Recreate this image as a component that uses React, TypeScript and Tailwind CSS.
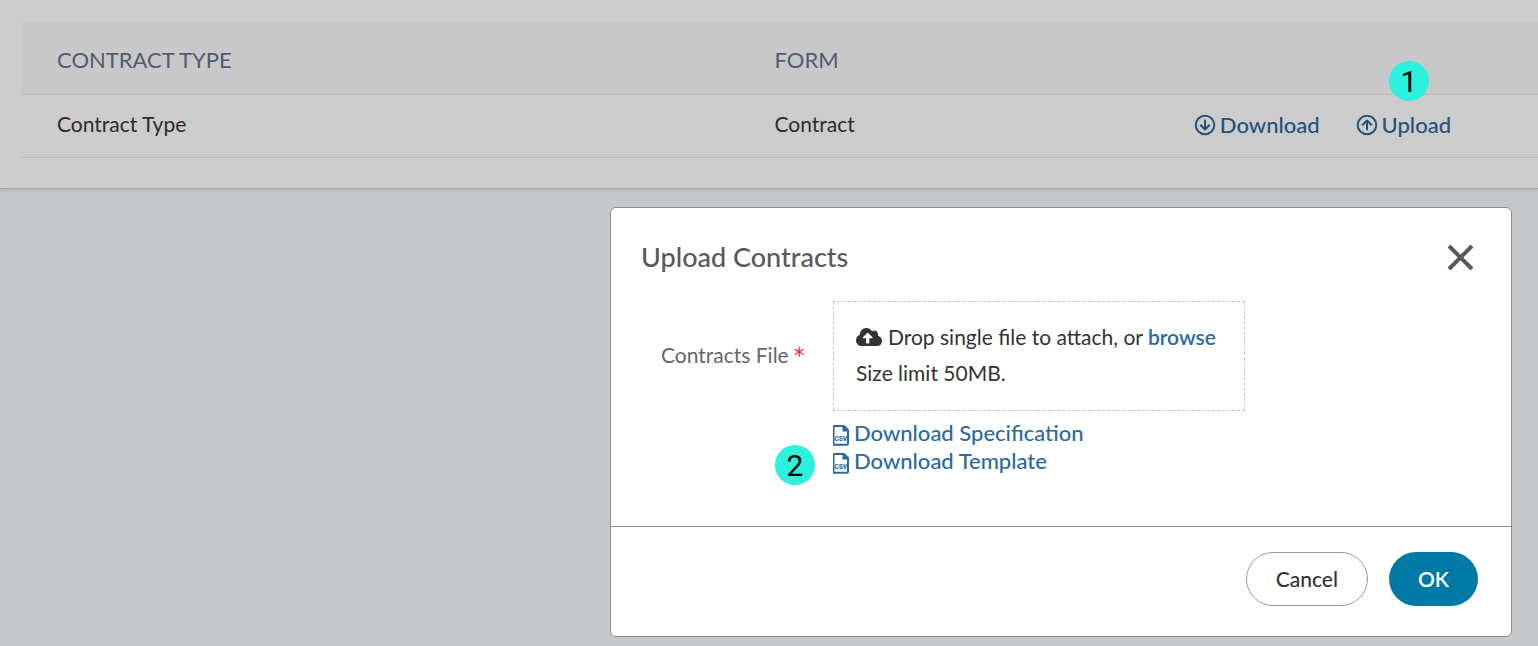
import React from "react";
import { FaCloudUploadAlt } from "react-icons/fa";

type IconProps = { className?: string };

const ArrowCircle: React.FC<IconProps> = ({ className }) => (
  <svg
    className={`h-[22px] w-[22px] shrink-0 ${className ?? ""}`}
    viewBox="0 0 22 22"
    fill="none"
    stroke="currentColor"
    strokeWidth="2"
    aria-hidden="true"
  >
    <circle cx="11" cy="11" r="9.3" />
    <path d="M11 5.800v9.700M6.200 10.800l4.800 4.700 4.800-4.700" strokeLinejoin="round" />
  </svg>
);

const CsvFile: React.FC = () => (
  <svg className="h-7 w-[17px] shrink-0" viewBox="0 0 17 28" fill="none" aria-hidden="true">
    <path
      d="M1.500 7H11L15 11V24.800a1 1 0 0 1-1 1H1.500a1 1 0 0 1-1-1V8a1 1 0 0 1 1-1z"
      stroke="currentColor"
      strokeWidth="2"
      strokeLinejoin="round"
    />
    <path d="M9.500 7v5.500H15V11L11 7z" fill="currentColor" />
    <text
      x="7.800"
      y="21.500"
      textAnchor="middle"
      fontSize="6.500"
      fontWeight="900"
      fontFamily="Roboto, sans-serif"
      fill="currentColor"
    >
      CSV
    </text>
  </svg>
);

const StepBadge: React.FC<{ step: number; className: string }> = ({ step, className }) => (
  <span
    className={`absolute flex h-10 w-10 items-center justify-center rounded-full bg-[#2bf1dd] pt-0.5 font-['Roboto',sans-serif] text-[30px] leading-10 font-normal text-black ${className}`}
  >
    {step}
  </span>
);

const ContractTable: React.FC = () => (
  <section className="border-b border-[#a3a5a8] bg-[#cccccc] pt-[22px] pb-[30px] pl-[21px] shadow-sm">
    <table className="w-full table-fixed text-left">
      <thead>
        <tr className="h-[72px] border-b border-[#bababa] bg-[#c8c8c8] text-[22px] text-[#535b70]">
          <th className="w-[47.3%] pt-1 pl-9 font-normal">CONTRACT TYPE</th>
          <th className="pt-1 pl-9 font-normal">FORM</th>
          <th className="w-[25%]" aria-label="Actions" />
        </tr>
      </thead>
      <tbody>
        <tr className="h-[63px] border-b border-[#bababa] text-[#2b2b2b]">
          <td className="pb-1 pl-9">Contract Type</td>
          <td className="pb-1 pl-9">Contract</td>
          <td className="pb-0.5">
            <div className="flex justify-end gap-9 pr-[87px] text-[22px] font-medium text-[#24527a]">
              <a href="#download" className="flex items-center gap-1">
                <ArrowCircle />
                Download
              </a>
              <a href="#upload" className="relative flex items-center gap-1">
                <ArrowCircle className="rotate-180" />
                Upload
                <StepBadge step={1} className="-top-[49px] right-[22px]" />
              </a>
            </div>
          </td>
        </tr>
      </tbody>
    </table>
  </section>
);

const UploadDialog: React.FC = () => (
  <div
    role="dialog"
    aria-labelledby="dialog-title"
    className="w-full max-w-[902px] rounded-md border border-[#8f9092] bg-white"
  >
    <header className="flex items-center justify-between pt-[31px] pr-[34px] pl-[30px]">
      <h2 id="dialog-title" className="text-[27px] leading-9 font-medium text-[#58595b]">
        Upload Contracts
      </h2>
      <button type="button" aria-label="Close" className="text-[#58595b]">
        <svg className="h-8 w-8" viewBox="0 0 32 32" fill="none" stroke="currentColor" strokeWidth="4" aria-hidden="true">
          <path d="M4 5l23 23M27 5l-23 23" />
        </svg>
      </button>
    </header>

    <div className="flex pt-[26px] pb-[50px] pl-[50px]">
      <label htmlFor="contracts-file" className="w-[172px] shrink-0 pt-[39px] leading-[30px] text-[#666666]">
        Contracts File <span className="font-['DejaVu_Sans',sans-serif] text-[#e01b22]">*</span>
      </label>
      <div>
        <div className="w-[412px] border border-dashed border-[#c4c4c4] px-[22px] pt-[17px] pb-[19px] leading-9 text-[#333333]">
          <div className="flex items-center whitespace-nowrap">
            <FaCloudUploadAlt className="mr-1.5 shrink-0 text-[26px]" />
            <span>
              Drop single file to attach, or{" "}
              <label htmlFor="contracts-file" className="cursor-pointer font-semibold text-[#2a6a9e]">
                browse
              </label>
            </span>
            <input id="contracts-file" type="file" className="sr-only" />
          </div>
          <p>Size limit 50MB.</p>
        </div>
        <div className="relative mt-2 flex flex-col items-start pb-px text-[22px] leading-7 font-medium text-[#2a6a9e]">
          <a href="#specification" className="flex items-center gap-1">
            <CsvFile />
            Download Specification
          </a>
          <a href="#template" className="flex items-center gap-1">
            <CsvFile />
            Download Template
          </a>
          <StepBadge step={2} className="top-[26px] -left-[58px]" />
        </div>
      </div>
    </div>

    <footer className="flex justify-end gap-[21px] border-t border-[#8f9092] pt-[25px] pr-[33px] pb-[30px]">
      <button type="button" className="h-[54px] rounded-full border border-[#999999] px-[29px] font-medium text-[#333333]">
        Cancel
      </button>
      <button type="button" className="h-[54px] rounded-full bg-[#007aa5] px-[29px] font-semibold text-white">
        OK
      </button>
    </footer>
  </div>
);

const App: React.FC = () => {
  return (
    <main className="min-h-screen bg-[#c6c7c9] font-['Lato',sans-serif] text-[21px] leading-[30px]">
      <ContractTable />
      <div className="flex justify-end pt-[18px] pr-[26px]">
        <UploadDialog />
      </div>
    </main>
  );
};

export default App;
